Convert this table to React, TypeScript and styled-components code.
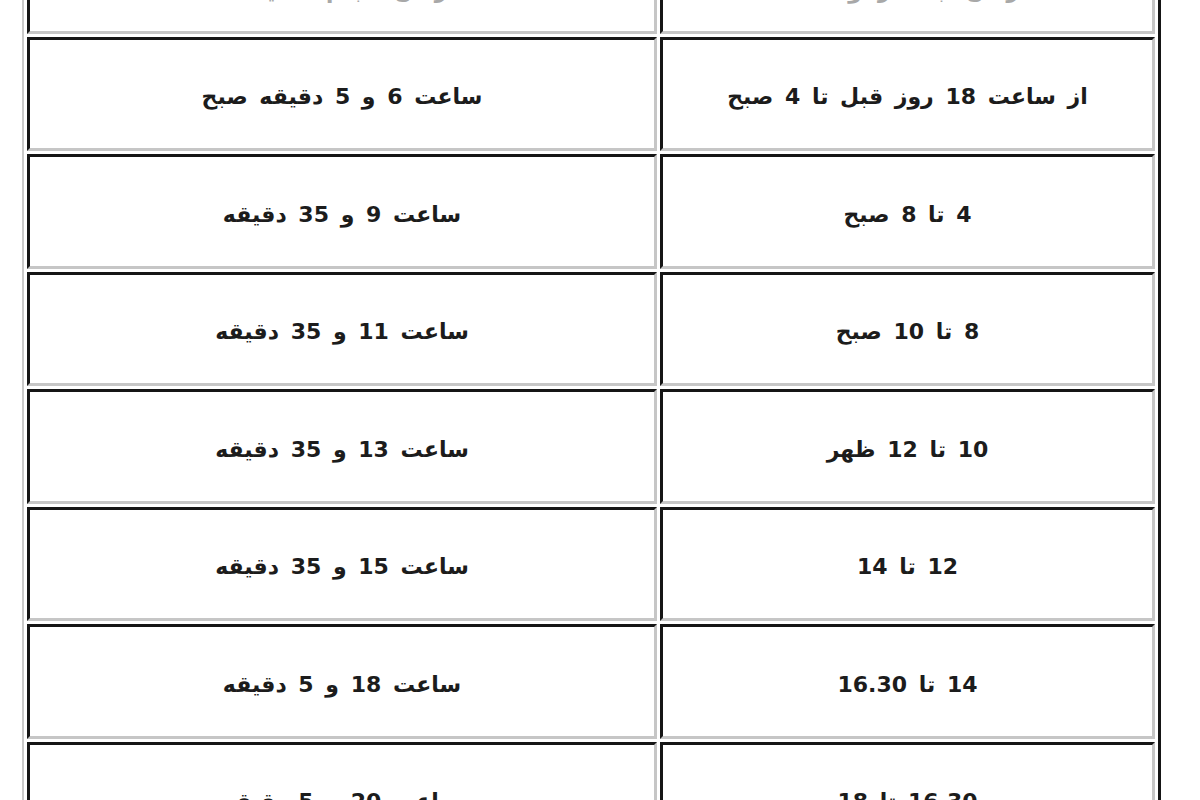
import React from "react";
import styled, { createGlobalStyle } from "styled-components";

const GlobalStyle = createGlobalStyle`
  *, *::before, *::after { box-sizing: border-box; }
  html, body {
    margin: 0;
    padding: 0;
    background: #ffffff;
    overflow: hidden;
  }
  body {
    font-family: "DejaVu Sans", "Noto Sans", sans-serif;
    color: #111111;
  }
`;

const Page = styled.div`
  width: 1200px;
  height: 800px;
  overflow: hidden;
  padding-left: 22px;
`;

const Table = styled.table`
  margin-top: -86px;
  width: 1136px;
  table-layout: fixed;
  border-collapse: separate;
  border-spacing: 3px;
  border-style: solid;
  border-width: 2px 3px 3px 2px;
  border-color: #c9c9c9 #151515 #151515 #c9c9c9;
  direction: ltr;
`;

const Row = styled.tr`
  height: 114.5px;
`;

const Cell = styled.td<{ $wide?: boolean; $head?: boolean }>`
  width: ${(p) => (p.$wide ? "630px" : "495px")};
  height: 114.5px;
  border-style: solid;
  border-width: 3px;
  border-color: #151515 #c6c6c6 #c6c6c6 #151515;
  direction: rtl;
  text-align: center;
  vertical-align: ${(p) => (p.$head ? "bottom" : "middle")};
  padding: 7px 8px 0 8px;
  font-family: "DejaVu Sans", "Noto Sans", sans-serif;
  font-size: 22px;
  font-weight: bold;
  word-spacing: 4px;
  line-height: 28px;
  color: #1c1c1c;
`;

const HeadText = styled.span`
  display: inline-block;
  transform: translateY(-26px);
  color: #a8a8a8;
`;

const rows: [string, string][] = [
  ["ساعت 6 و 5 دقیقه صبح", "از ساعت 18 روز قبل تا 4 صبح"],
  ["ساعت 9 و 35 دقیقه", "4 تا 8 صبح"],
  ["ساعت 11 و 35 دقیقه", "8 تا 10 صبح"],
  ["ساعت 13 و 35 دقیقه", "10 تا 12 ظهر"],
  ["ساعت 15 و 35 دقیقه", "12 تا 14"],
  ["ساعت 18 و 5 دقیقه", "14 تا 16.30"],
  ["ساعت 20 و 5 دقیقه", "16.30 تا 18"],
];

export default function App() {
  return (
    <>
      <GlobalStyle />
      <Page>
        <Table>
          <tbody>
            <Row>
              <Cell $wide $head>
                <HeadText>زمان انجام عملیات</HeadText>
              </Cell>
              <Cell $head>
                <HeadText>زمان ثبت درخواست</HeadText>
              </Cell>
            </Row>
            {rows.map(([left, right], i) => (
              <Row key={i}>
                <Cell $wide>{left}</Cell>
                <Cell>{right}</Cell>
              </Row>
            ))}
          </tbody>
        </Table>
      </Page>
    </>
  );
}
